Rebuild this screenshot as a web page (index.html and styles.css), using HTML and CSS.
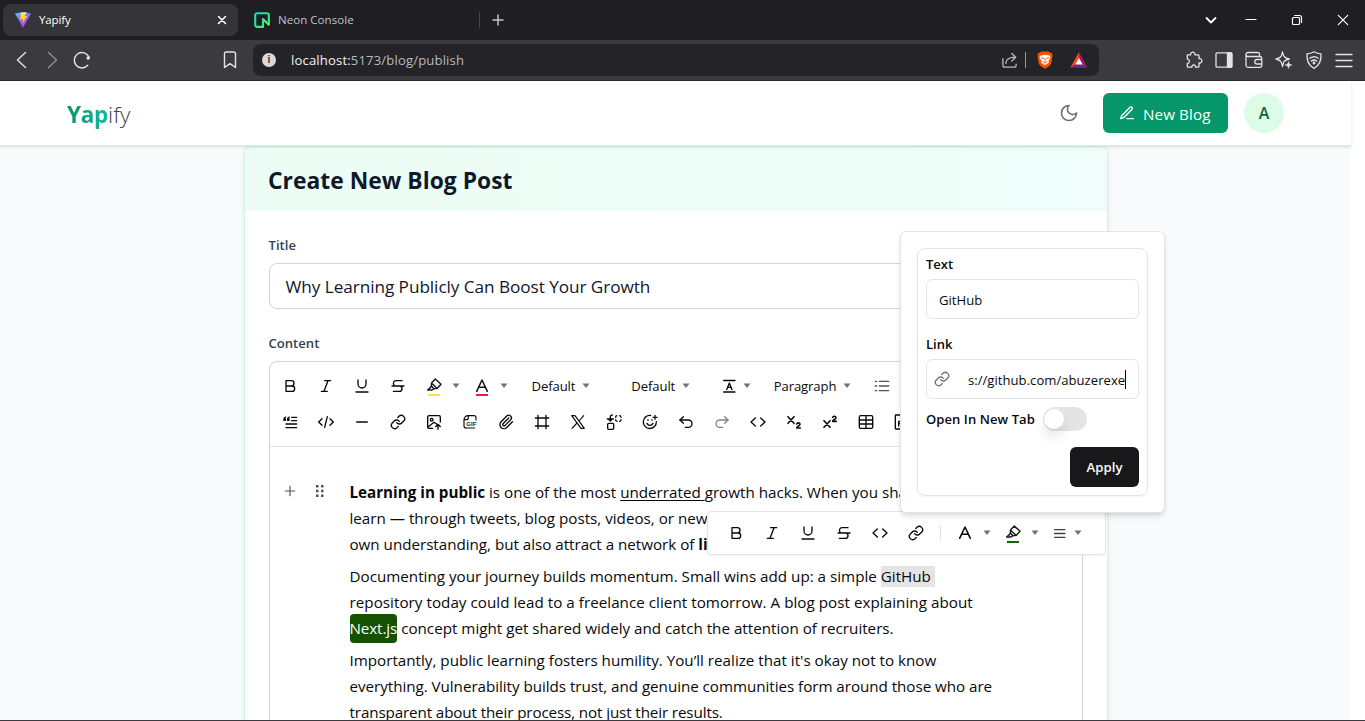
FILE: index.html
```html
<!DOCTYPE html>
<html lang="en">
<head>
<meta charset="utf-8">
<title>Yapify</title>
<link rel="stylesheet" href="styles.css">
</head>
<body>
<svg class="sprite" aria-hidden="true">
  <defs>
    <linearGradient id="vite-a" x1="0" y1="0" x2=".6" y2="1"><stop offset="0" stop-color="#41d1ff"/><stop offset=".5" stop-color="#8b6cff"/><stop offset="1" stop-color="#bd34fe"/></linearGradient>
    <linearGradient id="vite-b" x1="0" y1="0" x2="0" y2="1"><stop offset="0" stop-color="#ffea83"/><stop offset=".3" stop-color="#ffdd35"/><stop offset="1" stop-color="#ffa800"/></linearGradient>
    <linearGradient id="neon-a" x1="0" y1="0" x2="1" y2="1"><stop offset="0" stop-color="#12d9c4"/><stop offset=".55" stop-color="#2fe68e"/><stop offset="1" stop-color="#63f655"/></linearGradient>
  </defs>
  <symbol id="bold" viewBox="0 0 24 24"><path d="M6 12h9a4 4 0 0 1 0 8H6V4h8a4 4 0 0 1 0 8"/></symbol>
  <symbol id="italic" viewBox="0 0 24 24"><path d="M19 4h-9M14 20H5M15 4 9 20"/></symbol>
  <symbol id="underline" viewBox="0 0 24 24"><path d="M6 3v6a6 6 0 0 0 12 0V3M3 21h18"/></symbol>
  <symbol id="strike" viewBox="0 0 24 24"><path d="M18 4H9a4 4 0 0 0-3 6.500M14 12a4 4 0 0 1 0 8H5M3 12h18"/></symbol>
  <symbol id="marker" viewBox="0 0 24 24"><path d="m14 1.500 8.500 8-5.500 6-5 .5L8 12l.5-5zM8 12l-1.500 2.500L2.500 18H9l3-2M8.500 8l8 7.500" stroke-width="2.200"/></symbol>
  <symbol id="letter-a" viewBox="0 0 24 24"><path d="M4 20 12 3l8 17M7 14h10" stroke-width="2.300"/></symbol>
  <symbol id="line-height" viewBox="0 0 24 24"><path d="M4 3.800h17M4 21h17M8.500 17.500l4-10 4 10M10 14h5"/></symbol>
  <symbol id="list" viewBox="0 0 24 24"><path d="M8 5h14M8 12h14M8 19h14M2 5h2M2 12h2M2 19h2"/></symbol>
  <symbol id="quote" viewBox="0 0 24 24"><path d="M14.500 5H22M14.500 10H22M6 15h16M6 20.500h16"/><path d="M5.500 4.500C3 5.500 2.500 7 3 9.500h2V7.500H3.500M11 4.500C8.500 5.500 8 7 8.500 9.500h2V7.500H9" stroke-width="2"/></symbol>
  <symbol id="code-block" viewBox="0 0 24 24"><path d="m6 7-5 5 5 5M18 7l5 5-5 5M14 4l-4 16"/></symbol>
  <symbol id="minus" viewBox="0 0 24 24"><path d="M4 12h16"/></symbol>
  <symbol id="link" viewBox="0 0 24 24"><path d="M10 13a5 5 0 0 0 7.540.540l3-3a5 5 0 0 0-7.070-7.070l-1.720 1.710"/><path d="M14 11a5 5 0 0 0-7.540-.540l-3 3a5 5 0 0 0 7.070 7.070l1.710-1.710"/></symbol>
  <symbol id="image-up" viewBox="0 0 24 24"><path d="M10 21.500H4.500A2 2 0 0 1 2.500 19.500v-15a2 2 0 0 1 2-2h15a2 2 0 0 1 2 2V12M3 19.500l9-7 4 2.500M14.500 19l3.500-3.500 3.500 3.500M18 16v7"/><circle cx="8.500" cy="8.500" r="2"/></symbol>
  <symbol id="clip" viewBox="0 0 24 24"><path d="m16 6-8.400 8.600a2 2 0 0 0 2.800 2.800l8.400-8.600a4 4 0 1 0-5.700-5.700l-8.400 8.600a6 6 0 1 0 8.500 8.500l8.400-8.600"/></symbol>
  <symbol id="frame" viewBox="0 0 24 24"><path d="M22 6H2M22 18H2M6 2v20M18 2v20"/></symbol>
  <symbol id="x" viewBox="0 0 24 24"><path d="M2.500 2.500h5l14 19h-5zM3 21.500l7.500-8M13.500 10.500l7-8" stroke-width="1.700"/></symbol>
  <symbol id="replace" viewBox="0 0 24 24"><rect x="2.500" y="14" width="9" height="9" rx="1.500"/><path d="M2 7.500h9M6.500 10.500V4.500a3 3 0 0 1 3-3M4 8l2.500 2.500L9 8"/><path d="M14.500 5a2.500 2.500 0 0 1 1.500-2.500M20.500 2.500A2.500 2.500 0 0 1 22.500 5M22.500 8.500a2.500 2.500 0 0 1-2 2.500M16.500 11a2.500 2.500 0 0 1-2-2.500"/></symbol>
  <symbol id="smile" viewBox="0 0 24 24"><path d="M21.500 11.500A9.800 9.800 0 1 1 13 2.200M7.500 14s1.500 3 4.500 3 4.500-3 4.500-3M9 8.500v1M15 8.500v1M16.500 5h6M19.500 2v6"/></symbol>
  <symbol id="undo" viewBox="0 0 24 24"><path d="M8 14 3 9l5-5"/><path d="M3 9h12.500a5.500 5.500 0 0 1 0 11H11"/></symbol>
  <symbol id="redo" viewBox="0 0 24 24"><path d="m16 14 5-5-5-5"/><path d="M21 9H8.500a5.500 5.500 0 0 0 0 11H13"/></symbol>
  <symbol id="code" viewBox="0 0 24 24"><path d="m8 6-6.500 6L8 18M16 6l6.500 6-6.500 6"/></symbol>
  <symbol id="sub" viewBox="0 0 24 24"><path d="m3 4 9 10M12 4 3 14M16 15c1-2.500 5-2 5 .5 0 2-5 3.500-5 5.500h5.500" stroke-width="2.400"/></symbol>
  <symbol id="sup" viewBox="0 0 24 24"><path d="m3 10 9 10M12 10 3 20M16 5c1-2.500 5-2 5 .5 0 2-5 3.500-5 5.500h5.500" stroke-width="2.400"/></symbol>
  <symbol id="table" viewBox="0 0 24 24"><rect x="2" y="2.500" width="20" height="19" rx="2"/><path d="M12 3v18M2 9h20M2 15h20"/></symbol>
  <symbol id="pdf" viewBox="0 0 24 24"><rect x="2" y="1.500" width="19" height="21" rx="1"/><path d="M7 18v-7h3v3.500H7"/></symbol>
  <symbol id="align" viewBox="0 0 24 24"><path d="M3 5h19M3 12h19M3 19h19"/></symbol>
  <symbol id="plus" viewBox="0 0 24 24"><path d="M4 12h16M12 4v16"/></symbol>
  <symbol id="caret" viewBox="0 0 8 6"><path d="M.5.500h7L4 5z" fill="#71717a" stroke="none"/></symbol>
</svg>

<div class="tabs">
  <div class="tab tab-active">
    <svg class="fav" viewBox="0 0 16 16"><path d="M0 1.500 8 0l8 1.500L8 15.800z" fill="url(#vite-a)"/><path d="m5.700.8 6-.8-2 4h2.400L7.500 12l.4-4.500H5.200z" fill="url(#vite-b)"/></svg>
    <span class="tab-name">Yapify</span>
    <svg class="tab-x" viewBox="0 0 10 10"><path d="m1.500 1.500 7 7M8.500 1.500l-7 7"/></svg>
  </div>
  <div class="tab">
    <svg class="fav" viewBox="0 0 16 16"><path d="M9 14.900H3.200A2 2 0 0 1 1.200 12.800V3.200a2 2 0 0 1 2-2h9.600a2 2 0 0 1 2 2v9.500L9 7v7.900" fill="none" stroke="url(#neon-a)" stroke-width="2.100" stroke-linejoin="round"/></svg>
    <span class="tab-name dim">Neon Console</span>
  </div>
  <i class="tab-sep"></i>
  <svg class="tab-add" viewBox="0 0 12 12"><path d="M6 1v10M1 6h10"/></svg>
  <div class="win">
    <svg viewBox="0 0 14 14"><path d="m2.500 5 4.500 4.500L11.500 5" stroke-width="1.800"/></svg>
    <svg viewBox="0 0 14 14"><path d="M2 6.500h10"/></svg>
    <svg viewBox="0 0 14 14"><rect x="2.500" y="4.500" width="7" height="7" rx="1"/><path d="M4.500 2.500h5a2 2 0 0 1 2 2v5"/></svg>
    <svg viewBox="0 0 14 14"><path d="m2.300 2.300 9.400 9.400M11.700 2.300l-9.400 9.400"/></svg>
  </div>
</div>

<div class="browser">
  <svg class="b-back" viewBox="0 0 20 20"><path d="m13.500 2.500-8 7.500 8 7.500"/></svg>
  <svg class="b-fwd" viewBox="0 0 20 20"><path d="m6.500 2.500 8 7.500-8 7.500"/></svg>
  <svg class="b-reload" viewBox="0 0 20 20"><path d="M15.800 15.300A7.700 7.700 0 1 1 17 7"/><circle cx="16.200" cy="8" r="1.800" fill="#e4e4e8" stroke="none"/></svg>
  <svg class="b-mark" viewBox="0 0 20 20"><path d="M4.500 3.500a1.500 1.500 0 0 1 1.500-1.500h8a1.500 1.500 0 0 1 1.500 1.500v14L10 13.700 4.500 17.500z"/></svg>
  <div class="url">
    <span class="info">i</span>
    <span class="addr"><b>localhost:</b>5173/blog/publish</span>
    <svg class="share" viewBox="0 0 18 18"><path d="M2 7v7a2 2 0 0 0 2 2h10a2 2 0 0 0 2-2v-1M5 12c.5-4.500 4-6.500 10-6.500M11.500 1.500l4 4-4 4"/></svg>
    <i></i>
    <svg class="brave" viewBox="0 0 16 18"><path d="m4 .5-1 1.200L1 2 .5 5l1.300 7.500c.4 1.600 3.500 3.700 6.200 5.300 2.700-1.600 5.800-3.700 6.200-5.300L15.500 5 15 2l-2-.3L12 .5z" fill="#ff5000"/><path d="M3.500 4.500 8 3.800l4.500.7 1 2-2 3.500.3 1.700L9 13.500l-1 .8-1-.8-2.800-1.800.3-1.700-2-3.500z" fill="#fff"/><path d="m4.500 6.800 2.300.7M11.500 6.800l-2.300.7M8 8v2.500M6 10.800l2 1.400 2-1.400" fill="none" stroke="#ff5000" stroke-width=".9"/></svg>
    <svg class="bat" viewBox="0 0 18 16"><path d="M9 .3.300 15.700 6 12.300 9 7z" fill="#ff4724"/><path d="m9 .3 8.700 15.400L12 12.300 9 7z" fill="#9e1f63"/><path d="M.3 15.700h17.400L12 12.300H6z" fill="#662d91"/><path d="m9 6 3.700 6.500H5.300z" fill="#fff"/></svg>
  </div>
  <div class="tools">
    <svg viewBox="0 0 20 20"><path d="M3.300 4.800h3.400c-.8-3.500 5-3.500 4.200 0H14a1 1 0 0 1 1 1v2.900c3.800-.8 3.800 5 0 4.200v3.300a1 1 0 0 1-1 1h-2.500c.7-3-4.200-3-3.500 0H4.300a1 1 0 0 1-1-1v-2.800c2.700.6 2.700-4.900 0-4.200z"/></svg>
    <svg viewBox="0 0 20 20"><rect x="2" y="2.800" width="16" height="14.400" rx="1"/><path d="M13.500 3h4v14h-4z" fill="#e4e4e8"/></svg>
    <svg viewBox="0 0 20 20"><path d="M15.500 6.500V4a1.500 1.500 0 0 0-1.500-1.500H4a2 2 0 0 0 0 4h12A1.800 1.800 0 0 1 17.800 8v7.500a1.800 1.800 0 0 1-1.800 1.800H4A2 2 0 0 1 2 15.500v-11M17.500 9.500H13a2 2 0 0 0 0 4.500h4.500"/></svg>
    <svg viewBox="0 0 20 20"><path d="M8.500 2c.8 4.500 2 6 6.800 7-3.500.7-4.600 1.500-5.500 3M8.500 16.500c-.8-5-2-6.300-6.500-7.500 4.800-1.200 5.700-2.500 6.500-7M8.500 16.500l1-3.500"/><path d="M14.500 11.500c.4 2.600 1 3 3.500 3.500-2.500.5-3.100 1-3.500 3.500-.4-2.500-1-3-3.500-3.500 2.500-.5 3.100-.9 3.500-3.500z" fill="#e4e4e8" stroke-width=".5"/></svg>
    <svg viewBox="0 0 20 20"><path d="M10 1.800c2.500 1.500 4.500 2 7 2 .5 7-1 11.500-7 14.700-6-3.200-7.500-7.700-7-14.700 2.500 0 4.500-.5 7-2zM5.800 8.300c2.700-2 5.700-2 8.400 0M7.300 11c1.700-1.300 3.700-1.300 5.400 0"/><circle cx="10" cy="13" r=".8"/></svg>
    <svg viewBox="0 0 20 20"><path d="M2 4.500h16M2 10.500h16M2 16.500h16"/></svg>
  </div>
</div>

<div class="view">
  <div class="page">
    <nav class="nav">
      <div class="logo"><b>Yap</b><span>ify</span></div>
      <svg class="moon" viewBox="0 0 24 24"><path d="M12 3a6 6 0 0 0 9 9 9 9 0 1 1-9-9"/></svg>
      <div class="new"><svg viewBox="0 0 24 24"><path d="M12 20.500h9.500M16.500 3.500a2.100 2.100 0 0 1 3 3L7 19l-4.500 1.500L4 16z"/></svg><span>New Blog</span></div>
      <div class="avatar">A</div>
    </nav>

    <main class="card">
      <h1>Create New Blog Post</h1>
      <div class="form">
        <label class="lbl">Title</label>
        <div class="title-input"><span>Why Learning Publicly Can Boost Your Growth</span></div>
        <label class="lbl lbl-content">Content</label>
        <div class="editor">
          <div class="bar">
            <div class="row">
              <svg class="ic"><use href="#bold"/></svg><svg class="ic"><use href="#italic"/></svg><svg class="ic"><use href="#underline"/></svg><svg class="ic"><use href="#strike"/></svg>
              <span class="ink yellow"><svg class="ic"><use href="#marker"/></svg></span><svg class="caret"><use href="#caret"/></svg>
              <span class="ink red"><svg class="ic"><use href="#letter-a"/></svg></span><svg class="caret"><use href="#caret"/></svg>
              <span class="select">Default<svg class="caret"><use href="#caret"/></svg></span>
              <span class="select second">Default<svg class="caret"><use href="#caret"/></svg></span>
              <svg class="ic lh"><use href="#line-height"/></svg><svg class="caret lhc"><use href="#caret"/></svg>
              <span class="select para">Paragraph<svg class="caret"><use href="#caret"/></svg></span>
              <svg class="ic list"><use href="#list"/></svg>
            </div>
            <div class="row">
              <svg class="ic"><use href="#quote"/></svg><svg class="ic"><use href="#code-block"/></svg><svg class="ic"><use href="#minus"/></svg><svg class="ic"><use href="#link"/></svg><svg class="ic"><use href="#image-up"/></svg><svg class="ic gif" viewBox="0 0 24 24"><path d="M3 8.500A6 6 0 0 1 9 2.500h9a3 3 0 0 1 3 3V9M3 8.500h3.500a3 3 0 0 0 3-3V2.500M3 8.500V18a3 3 0 0 0 3 3h13" stroke-width="1.700"/><text x="6.500" y="18.500" class="gif-text">GIF</text></svg><svg class="ic"><use href="#clip"/></svg><svg class="ic"><use href="#frame"/></svg><svg class="ic"><use href="#x"/></svg><svg class="ic"><use href="#replace"/></svg><svg class="ic"><use href="#smile"/></svg><svg class="ic"><use href="#undo"/></svg><svg class="ic faded"><use href="#redo"/></svg><svg class="ic"><use href="#code"/></svg><svg class="ic"><use href="#sub"/></svg><svg class="ic"><use href="#sup"/></svg><svg class="ic"><use href="#table"/></svg><svg class="ic"><use href="#pdf"/></svg>
            </div>
          </div>
          <div class="doc">
            <div class="gutter">
              <svg class="add"><use href="#plus"/></svg>
              <svg class="grip" viewBox="0 0 8 12"><path d="M0 0h2.500v2.500H0zM5 0h2.500v2.500H5zM0 4.700h2.500v2.500H0zM5 4.700h2.500v2.500H5zM0 9.400h2.500v2.500H0zM5 9.400h2.500v2.500H5z"/></svg>
            </div>
            <div class="prose">
              <p><span class="l1"><b>Learning in public</b> is one of the most <u>underrated </u>growth hacks. When you share what you</span><br><span class="l2">learn — through tweets, blog posts, videos, or newsletters</span><br><span class="l3">own understanding, but also attract a network of <b>like-minded</b></span></p>
              <p><span class="l4">Documenting your journey builds momentum. Small wins add up: a simple <mark>GitHub </mark></span><br><span class="l5">repository today could lead to a freelance client tomorrow. A blog post explaining about</span><br><span class="l6"><em>Next.js</em> concept might get shared widely and catch the attention of recruiters.</span></p>
              <p><span class="l7">Importantly, public learning fosters humility. You’ll realize that it's okay not to know</span><br><span class="l8">everything. Vulnerability builds trust, and genuine communities form around those who are</span><br><span class="l9">transparent about their process, not just their results.</span></p>
            </div>
          </div>
        </div>
      </div>
    </main>
  </div>
</div>

<div class="bubble">
  <svg class="ic"><use href="#bold"/></svg><svg class="ic"><use href="#italic"/></svg><svg class="ic"><use href="#underline"/></svg><svg class="ic"><use href="#strike"/></svg><svg class="ic"><use href="#code"/></svg><svg class="ic"><use href="#link"/></svg>
  <i></i>
  <svg class="ic"><use href="#letter-a"/></svg><svg class="caret"><use href="#caret"/></svg>
  <span class="ink green"><svg class="ic"><use href="#marker"/></svg></span><svg class="caret"><use href="#caret"/></svg>
  <svg class="ic al"><use href="#align"/></svg><svg class="caret alc"><use href="#caret"/></svg>
</div>

<div class="pop">
  <div class="pop-in">
    <label>Text</label>
    <div class="field"><span class="f1">GitHub</span></div>
    <label class="second-label">Link</label>
    <div class="field link-field"><svg><use href="#link"/></svg><span class="f2">s://github.com/abuzerexe</span></div>
    <div class="toggle-row"><label>Open In New Tab</label><span class="toggle"></span></div>
    <div class="apply"><span>Apply</span></div>
  </div>
</div>
<div class="edge"></div>
</body>
</html>
```

FILE: styles.css
```css
* { box-sizing: border-box; }
body {
  margin: 0;
  width: 1365px;
  height: 721px;
  overflow: hidden;
  display: flex;
  flex-direction: column;
  position: relative;
  font-family: "Open Sans", "Noto Sans", sans-serif;
  background: #fff;
  color: #09090b;
}
svg { fill: none; stroke: currentColor; stroke-linecap: round; stroke-linejoin: round; flex: none; display: block; }
.sprite { position: absolute; width: 0; height: 0; }
i { display: block; flex: none; }

/* tab strip */
.tabs { height: 40px; flex: none; background: #1f1e23; display: flex; align-items: center; color: #fff; padding-left: 3px; }
.tab { height: 32px; width: 235px; display: flex; align-items: center; padding: 0 12px; gap: 8px; border-radius: 8px; font-size: 11.5px; line-height: 14px; padding-bottom: 1px; }
.tab-active { background: #353439; }
.tab + .tab { padding-left: 16px; gap: 8px; }
.fav { width: 16px; height: 16px; stroke: none; }
.tab-name { flex: 1; letter-spacing: -.15px; }
.dim { color: #c2c2c6; letter-spacing: .05px; }
.tab-x { width: 10px; height: 10px; stroke-width: 1.6; margin-right: -1px; }
.tab-sep { width: 1px; height: 16px; background: #45444a; margin-left: 6px; }
.tab-add { width: 12px; height: 12px; stroke: #c5c5c9; stroke-width: 1.5; margin-left: 12px; }
.win { margin-left: auto; display: flex; align-items: center; padding-right: 15px; }
.win svg { width: 14px; height: 14px; stroke-width: 1.2; margin-left: 32px; }
.win svg:nth-child(2) { margin-left: 26px; }

/* address row */
.browser { height: 41px; flex: none; background: #3b3a3f; border-bottom: 1px solid #29282c; display: flex; align-items: center; color: #e4e4e8; padding-left: 12px; }
.browser svg { stroke-width: 1.4; }
.b-back, .b-fwd, .b-reload, .b-mark { width: 20px; height: 20px; }
.b-fwd { margin-left: 10px; opacity: .5; }
.b-reload { margin-left: 10px; }
.b-mark { margin-left: 128px; }
.url { width: 846px; height: 32px; border-radius: 8px; background: #242327; margin-left: 13px; display: flex; align-items: center; padding: 0 12px 0 9px; }
.info { width: 14px; height: 14px; border-radius: 50%; background: #d9d9dd; color: #303034; font: bold 10px/14px "Liberation Sans", sans-serif; text-align: center; }
.addr { margin-left: 15px; font-size: 13.1px; letter-spacing: .15px; color: #b9b9be; }
.addr b { font-weight: 400; color: #f2f2f5; }
.share { width: 17px; height: 17px; margin-left: auto; color: #b9b9be; }
.url i { width: 1px; height: 16px; background: #98989d; margin: 0 11px 0 7px; }
.brave { width: 16px; height: 18px; }
.url .bat { width: 18px; height: 16px; stroke: none; margin-left: 17px; margin-right: -1px; }
.url .brave { stroke: none; }
.tools { margin-left: auto; display: flex; gap: 10px; padding-right: 11px; }
.tools svg { width: 20px; height: 20px; stroke-width: 1.3; }

/* page */
.view { flex: 1; min-height: 0; overflow: hidden; display: flex; }
.page { width: 1351px; flex: none; background: #f9fafb; }
.nav { position: relative; z-index: 2; height: 65px; background: #fff; border-bottom: 1px solid #d1f5e3; box-shadow: 0 1px 3px rgba(0,0,0,.13); display: flex; align-items: center; padding: 0 67px; }
.logo { font-size: 22.6px; flex: 1; display: flex; padding-top: 3px; }
.logo b { background: linear-gradient(90deg, #059669, #14b8a6); -webkit-background-clip: text; background-clip: text; color: transparent; letter-spacing: -.35px; }
.logo span { font-weight: 300; color: #374151; letter-spacing: .1px; }
.moon { width: 20px; height: 20px; stroke: #6b7280; stroke-width: 2; }
.new { width: 125px; height: 40px; border-radius: 6px; background: #059669; color: #fff; margin-left: 24px; display: flex; align-items: center; gap: 8px; padding-left: 16px; font-size: 15.2px; letter-spacing: .1px; }
.new span { padding-top: 1px; }
.new svg { width: 16px; height: 16px; stroke-width: 2; }
.avatar { width: 40px; height: 40px; border-radius: 50%; background: #dcfce7; color: #166534; font-weight: 600; font-size: 16px; text-align: center; line-height: 40px; margin-left: 16px; }
.card { width: 864px; height: 700px; margin: 0 auto 0 244px; background: #fff; border: 1px solid #d1fae5; border-radius: 8px 8px 0 0; box-shadow: 0 1px 4px rgba(0,0,0,.1); overflow: hidden; }
h1 { margin: 0; height: 64px; line-height: 67px; padding-left: 23px; font-size: 22.8px; font-weight: 700; letter-spacing: .04px; color: #0f172a; background: linear-gradient(90deg, #ecfdf5, #f0fdfa); white-space: nowrap; }
.form { padding: 24px 24px 0; }
.lbl { display: block; font-size: 13.1px; line-height: 20px; font-weight: 600; color: #374151; margin-left: -.5px; }
.title-input { height: 46px; margin-top: 8px; border: 1px solid #d1d5db; border-radius: 8px; padding-left: 15.5px; font-size: 17.2px; letter-spacing: -.06px; line-height: 45px; color: #0f172a; }
.lbl-content { margin-top: 24px; }
.editor { margin-top: 8px; border: 1px solid #d1d5db; border-radius: 8px 8px 0 0; }
.bar { height: 85px; border-bottom: 1px solid #e4e4e7; padding: 8px 4px; display: flex; flex-direction: column; gap: 4px; }
.row { height: 32px; display: flex; align-items: center; white-space: nowrap; overflow: hidden; }
.ic { width: 16px; height: 16px; margin: 0 10px; stroke-width: 2; }
.row .ic { margin: 0 12px 0 8px; }
.row .ic + .ic { margin-left: 8px; }
.caret { width: 8px; height: 6px; margin: 0; }
.ink { display: flex; height: 18px; border-bottom: 2px solid; width: 12px; margin: 0 14px 0 10px; align-items: flex-start; }
.ink .ic, .row .ink .ic { margin: 0 -2px; }
.yellow { border-color: #fde047; } .red { border-color: #e11d48; } .green { border-color: #166500; }
.ink svg { color: #18181b; }
.row .ink { margin: 2px 12px 0 10px; }
.row .ink + .caret { margin-right: 6px; }
.select { display: flex; align-items: center; font-size: 13.1px; letter-spacing: -.1px; margin-left: 17.5px; }
.select .caret { margin-left: 6.5px; }
.select.second { margin-left: 41.5px; }
.row .lh { margin: 0 6px 0 31px; }
.select.para { margin-left: 23px; }
.row .list { margin: 0 0 0 23px; color: #52525b; }
.faded { opacity: .5; }
.gif-text { font: bold 9px "Liberation Sans", sans-serif; fill: #18181b; stroke: none; }
.doc { display: flex; padding-top: 32px; }
.gutter { width: 79.5px; flex: none; display: flex; color: #52525b; padding: 6px 0 0 13px; }
.add { width: 14px; height: 14px; stroke-width: 2; margin-top: -1px; }
.grip { width: 8px; height: 12px; margin-left: 19px; fill: #52525b; stroke: none; }
.prose { font-size: 15.2px; line-height: 26px; white-space: nowrap; }
.prose p { margin: 0 0 6px; }
.prose p > span { display: inline-block; height: 26px; vertical-align: top; }
.l3 { letter-spacing: -.02px; }
.l5 { letter-spacing: .035px; }
.l8 { letter-spacing: -.04px; }
.l9 { letter-spacing: -.12px; }
.prose u { text-underline-offset: 2px; }
.prose mark { background: #e4e4e4; color: inherit; display: inline-block; line-height: 21px; white-space: pre; }
.prose em { font-style: normal; color: #fff; background: #145200; border-radius: 4px; display: inline-block; line-height: 29px; margin: -3px 0 -1px; letter-spacing: -.1px; }

/* floating layers */
.bubble { position: absolute; left: 707px; top: 511px; width: 399px; height: 44px; background: #fff; border: 1px solid #e4e4e7; border-radius: 4px; display: flex; align-items: center; padding-left: 10px; box-shadow: 0 1px 2px rgba(0,0,0,.05); }
.bubble i { width: 1px; height: 16px; background: #e4e4e7; margin: 0 6px; }
.bubble .ic + .caret { margin: 0 2px 0 0; }
.bubble .ink { margin: 1px 9px 0 14px; }
.bubble .ink + .caret { margin-left: 3px; }
.bubble .al { width: 13px; height: 13px; margin: 0 0 0 14px; color: #3f3f46; stroke-width: 2.4; }
.bubble .ic + .alc { margin-left: 8px; }
.pop { position: absolute; left: 900px; top: 231px; width: 265px; height: 282px; background: #fff; border: 1px solid #e4e4e7; border-radius: 6px; padding: 16px; box-shadow: 0 4px 6px -1px rgba(0,0,0,.12), 0 2px 4px -2px rgba(0,0,0,.1); }
.pop-in { height: 248px; border: 1px solid #e4e4e7; border-radius: 8px; padding: 5px 8px; box-shadow: 0 1px 2px rgba(0,0,0,.05); }
.pop label { display: block; font-size: 13px; font-weight: 600; line-height: 21px; height: 21px; }
.field { height: 40px; border: 1px solid #e4e4e7; border-radius: 6px; margin-top: 4px; padding-left: 12px; font-size: 13.1px; line-height: 40px; }
.pop .second-label { margin-top: 15px; }
.link-field { display: flex; align-items: center; padding-left: 7px; }
.link-field svg { width: 16px; height: 16px; stroke: #71717a; stroke-width: 2; margin-right: 18px; }
.f2 { line-height: 18px; border-right: 1px solid #000; letter-spacing: .02px; padding-top: 1px; }
.toggle-row { display: flex; align-items: center; margin-top: 8px; height: 24px; }
.pop .toggle-row label { width: 109px; white-space: nowrap; letter-spacing: .08px; }
.toggle { width: 44px; height: 24px; border-radius: 12px; background: #e4e4e7; margin-left: 8px; display: flex; align-items: center; padding-left: 1px; }
.toggle::before { content: ""; width: 20px; height: 20px; border-radius: 50%; background: #fff; box-shadow: 0 8px 12px rgba(0,0,0,.1); }
.apply { width: 69px; height: 40px; margin: 16px 0 0 auto; border-radius: 6px; background: #18181b; color: #fafafa; font-size: 13.2px; font-weight: 600; text-align: center; line-height: 41px; }
.edge { position: absolute; left: 0; right: 0; bottom: 0; height: 1px; background: #3b3a3f; }
```
